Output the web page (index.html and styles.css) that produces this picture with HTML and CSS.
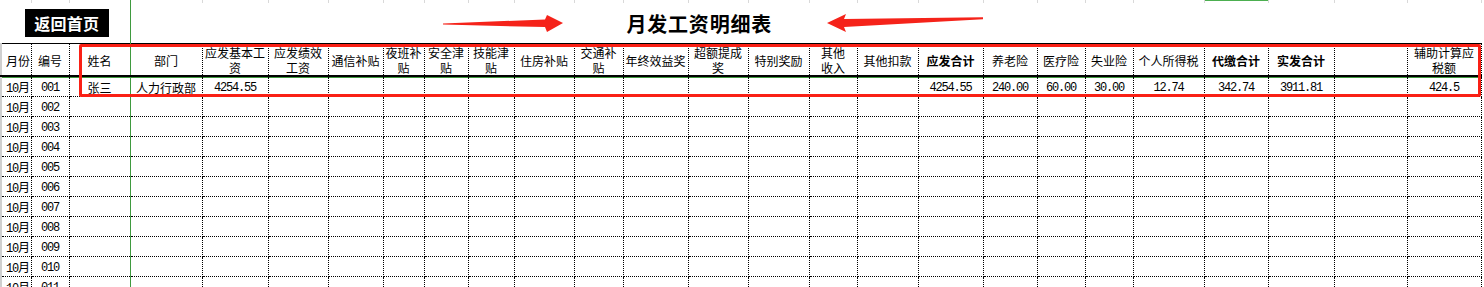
FILE: index.html
```html
<!DOCTYPE html>
<html lang="zh-CN">
<head>
<meta charset="utf-8">
<title>月发工资明细表</title>
<link rel="stylesheet" href="styles.css">
</head>
<body>
<div class="sheet">
<table class="grid">
<colgroup>
<col style="width:30px"><col style="width:38px"><col style="width:61px"><col style="width:72px"><col style="width:66px"><col style="width:60px"><col style="width:55px"><col style="width:41px"><col style="width:44px"><col style="width:46px"><col style="width:60px"><col style="width:49px"><col style="width:65px"><col style="width:60px"><col style="width:61px"><col style="width:48px"><col style="width:61px"><col style="width:65px"><col style="width:54px"><col style="width:48px"><col style="width:48px"><col style="width:71px"><col style="width:64px"><col style="width:66px"><col style="width:73px"><col style="width:74px">
</colgroup>
<tr class="strip">
<td></td><td></td><td class="gl"></td><td></td><td></td><td></td><td></td><td></td><td></td><td></td><td></td><td></td><td></td><td></td><td></td><td></td><td></td><td></td><td></td><td></td><td></td><td></td><td class="sel"></td><td></td><td></td><td></td>
</tr>
<tr class="title-row">
<td colspan="3" class="btn-cell"><span class="home-btn">返回首页</span></td>
<td colspan="20" class="title-cell gl-left">月发工资明细表</td>
<td colspan="3"></td>
</tr>
<tr class="head">
<td class="left">月份</td><td>编号</td><td class="name gl">姓名</td><td>部门</td><td>应发基本工<br>资</td><td>应发绩效<br>工资</td><td>通信补贴</td><td>夜班补<br>贴</td><td>安全津<br>贴</td><td>技能津<br>贴</td><td>住房补贴</td><td>交通补<br>贴</td><td>年终效益奖</td><td>超额提成<br>奖</td><td>特别奖励</td><td>其他<br>收入</td><td>其他扣款</td><td class="b">应发合计</td><td>养老险</td><td>医疗险</td><td>失业险</td><td>个人所得税</td><td class="b">代缴合计</td><td class="b">实发合计</td><td></td><td>辅助计算应<br>税额</td>
</tr>
<tr class="row first">
<td class="left"><span class="mono">10</span>月</td><td class="mono">001</td><td class="name gl">张三</td><td>人力行政部</td><td class="mono">4254.55</td><td></td><td></td><td></td><td></td><td></td><td></td><td></td><td></td><td></td><td></td><td></td><td></td><td class="mono">4254.55</td><td class="mono">240.00</td><td class="mono">60.00</td><td class="mono">30.00</td><td class="mono">12.74</td><td class="mono">342.74</td><td class="mono">3911.81</td><td></td><td class="mono">424.5</td>
</tr>
<tr class="row"><td class="left"><span class="mono">10</span>月</td><td class="mono">002</td><td class="gl"></td><td></td><td></td><td></td><td></td><td></td><td></td><td></td><td></td><td></td><td></td><td></td><td></td><td></td><td></td><td></td><td></td><td></td><td></td><td></td><td></td><td></td><td></td><td></td></tr>
<tr class="row"><td class="left"><span class="mono">10</span>月</td><td class="mono">003</td><td class="gl"></td><td></td><td></td><td></td><td></td><td></td><td></td><td></td><td></td><td></td><td></td><td></td><td></td><td></td><td></td><td></td><td></td><td></td><td></td><td></td><td></td><td></td><td></td><td></td></tr>
<tr class="row"><td class="left"><span class="mono">10</span>月</td><td class="mono">004</td><td class="gl"></td><td></td><td></td><td></td><td></td><td></td><td></td><td></td><td></td><td></td><td></td><td></td><td></td><td></td><td></td><td></td><td></td><td></td><td></td><td></td><td></td><td></td><td></td><td></td></tr>
<tr class="row"><td class="left"><span class="mono">10</span>月</td><td class="mono">005</td><td class="gl"></td><td></td><td></td><td></td><td></td><td></td><td></td><td></td><td></td><td></td><td></td><td></td><td></td><td></td><td></td><td></td><td></td><td></td><td></td><td></td><td></td><td></td><td></td><td></td></tr>
<tr class="row"><td class="left"><span class="mono">10</span>月</td><td class="mono">006</td><td class="gl"></td><td></td><td></td><td></td><td></td><td></td><td></td><td></td><td></td><td></td><td></td><td></td><td></td><td></td><td></td><td></td><td></td><td></td><td></td><td></td><td></td><td></td><td></td><td></td></tr>
<tr class="row"><td class="left"><span class="mono">10</span>月</td><td class="mono">007</td><td class="gl"></td><td></td><td></td><td></td><td></td><td></td><td></td><td></td><td></td><td></td><td></td><td></td><td></td><td></td><td></td><td></td><td></td><td></td><td></td><td></td><td></td><td></td><td></td><td></td></tr>
<tr class="row"><td class="left"><span class="mono">10</span>月</td><td class="mono">008</td><td class="gl"></td><td></td><td></td><td></td><td></td><td></td><td></td><td></td><td></td><td></td><td></td><td></td><td></td><td></td><td></td><td></td><td></td><td></td><td></td><td></td><td></td><td></td><td></td><td></td></tr>
<tr class="row"><td class="left"><span class="mono">10</span>月</td><td class="mono">009</td><td class="gl"></td><td></td><td></td><td></td><td></td><td></td><td></td><td></td><td></td><td></td><td></td><td></td><td></td><td></td><td></td><td></td><td></td><td></td><td></td><td></td><td></td><td></td><td></td><td></td></tr>
<tr class="row"><td class="left"><span class="mono">10</span>月</td><td class="mono">010</td><td class="gl"></td><td></td><td></td><td></td><td></td><td></td><td></td><td></td><td></td><td></td><td></td><td></td><td></td><td></td><td></td><td></td><td></td><td></td><td></td><td></td><td></td><td></td><td></td><td></td></tr>
<tr class="row"><td class="left"><span class="mono">10</span>月</td><td class="mono">011</td><td class="gl"></td><td></td><td></td><td></td><td></td><td></td><td></td><td></td><td></td><td></td><td></td><td></td><td></td><td></td><td></td><td></td><td></td><td></td><td></td><td></td><td></td><td></td><td></td><td></td></tr>
</table>
<div class="mark-box"></div>
<svg class="arrows" width="1484" height="44" viewBox="0 0 1484 44">
<polygon fill="#f5231a" points="443,23.5 545,19.5 547,15 563,23 547,32 545,27 443,24.6"/>
<polygon fill="#f5231a" points="827,23 846,14 844,19 983,17.3 983,19.3 844,27 846,32"/>
</svg>
</div>
</body>
</html>
```
FILE: styles.css
```css
html, body {
  margin: 0;
  padding: 0;
  background: #fff;
}
body {
  font-family: "Noto Sans CJK SC", "Noto Sans", sans-serif;
  font-size: 12px;
  color: #000;
  overflow: hidden;
}
.sheet {
  position: relative;
  width: 1484px;
  height: 287px;
  overflow: hidden;
}
.grid {
  border-collapse: collapse;
  table-layout: fixed;
  width: 1480px;
}
.grid td {
  padding: 0;
  text-align: center;
  vertical-align: middle;
  white-space: nowrap;
  overflow: hidden;
}
.strip td {
  height: 3px;
  border-right: 1px solid #d9d9d9;
}
.strip td.gl {
  border-right: 1px solid #3f9a3f;
}
.strip td.sel {
  border-right: 1px solid #d9d9d9;
  box-shadow: inset 0 1px 0 #4caf50;
}
.title-row td {
  height: 40px;
  border: none;
}
.title-row td.gl-left {
  border-left: 1px solid #3f9a3f;
}
.home-btn {
  display: inline-block;
  width: 84px;
  height: 28px;
  line-height: 28px;
  margin-left: 3px;
  background: #000;
  color: #fff;
  font-size: 16px;
  font-weight: bold;
  letter-spacing: 0.3px;
}
.title-cell {
  font-size: 20px;
  font-weight: bold;
  letter-spacing: 0.8px;
  padding-top: 2px;
}
.head td {
  height: 30px;
  line-height: 15px;
  border-top: 1px solid #000;
  border-bottom: 2px solid #000;
  border-left: 1px dotted #000;
  border-right: 1px dotted #000;
  padding-top: 1px;
}
.head td.b {
  font-weight: bold;
}
.row td {
  height: 17px;
  line-height: 14px;
  padding-top: 2px;
  border-bottom: 1px dotted #000;
  border-left: 1px dotted #000;
  border-right: 1px dotted #000;
}
.grid td.gl {
  border-right: 1px solid #3f9a3f;
}
.row.first td {
  box-shadow: inset 0 1px 0 #3f9a3f;
}
.grid td.left {
  text-align: left;
  padding-left: 4px;
  border-left: 2px solid #cfcfcf;
}
.grid td.name {
  text-align: left;
  padding-left: 18px;
}
.mono {
  font-family: "Liberation Mono", monospace;
  font-size: 12px;
  letter-spacing: -1.2px;
}
.mark-box {
  position: absolute;
  left: 79px;
  top: 44px;
  width: 1396px;
  height: 47px;
  border: 3px solid #fa2015;
  border-radius: 2px;
  pointer-events: none;
}
.arrows {
  position: absolute;
  left: 0;
  top: 0;
  pointer-events: none;
}
```
